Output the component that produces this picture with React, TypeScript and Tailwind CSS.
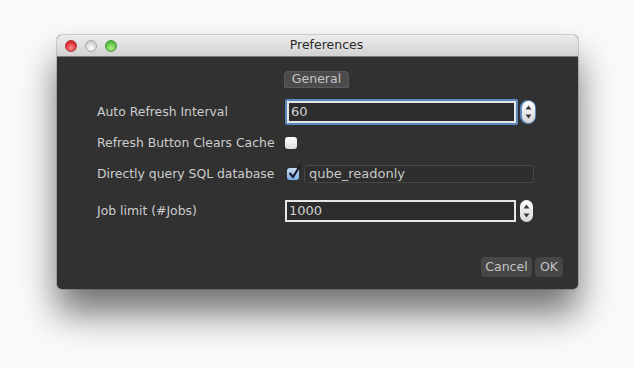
import React from "react";

const font = { fontFamily: '"DejaVu Sans", "Liberation Sans", sans-serif' };

function Spinner({ focused }: { focused?: boolean }) {
  return (
    <div
      className={
        "ml-[2px] flex h-[24px] w-[16px] items-center justify-center rounded-[8px] " +
        (focused ? "bg-[#5a88bd]" : "")
      }
    >
      <div className="flex h-[22px] w-[13px] flex-col items-center justify-between rounded-[7px] bg-gradient-to-b from-[#ffffff] to-[#d6d6d6] py-[4px]">
        <svg width="7" height="5" viewBox="0 0 7 5">
          <path d="M3.5 0.5 L6.5 4.5 L0.5 4.5 Z" fill="#3a3a3a" />
        </svg>
        <svg width="7" height="5" viewBox="0 0 7 5">
          <path d="M0.5 0.5 L6.5 0.5 L3.5 4.5 Z" fill="#3a3a3a" />
        </svg>
      </div>
    </div>
  );
}

export default function App() {
  return (
    <div className="h-[368px] w-[635px] bg-[#fafafa] pl-[57px] pt-[35px]" style={font}>
      <div className="flex h-[254px] w-[521px] flex-col overflow-hidden rounded-[5px] bg-[#313131] shadow-[0_24px_36px_rgba(0,0,0,0.55),0_0_0_1px_rgba(0,0,0,0.15)]">
        {/* title bar */}
        <div className="relative flex h-[22px] shrink-0 items-center border-b border-[#7a7a7a] bg-gradient-to-b from-[#ececec] to-[#d2d2d2]">
          <div className="absolute left-[8px] top-[5px] flex gap-[8px]">
            <div className="h-[12px] w-[12px] rounded-full border border-[#b0303a] bg-[radial-gradient(circle_at_50%_70%,#ff8a8a,#d8262f_70%)]" />
            <div className="h-[12px] w-[12px] rounded-full border border-[#a8a8a8] bg-[radial-gradient(circle_at_50%_70%,#ffffff,#d0d0d0_70%)]" />
            <div className="h-[12px] w-[12px] rounded-full border border-[#4a9a3a] bg-[radial-gradient(circle_at_50%_70%,#b8f08a,#4fb83a_70%)]" />
          </div>
          <div className="w-full pl-[18px] text-center text-[12.5px] leading-none text-[#2a2a2a]">Preferences</div>
        </div>

        {/* body */}
        <div className="flex flex-1 flex-col">
          <div className="ml-[227px] mt-[14px] flex h-[17px] w-[65px] items-center justify-center rounded-t-[4px] rounded-b-[1px] border border-[#5a5a5a] bg-[#4b4b4b] text-[12.5px] leading-none text-[#c4c4c4]">
            General
          </div>

          {/* row 1 */}
          <div className="mt-[12px] flex h-[24px] items-center">
            <div className="w-[228px] pl-[40px] text-[12.4px] text-[#cdcdcd]">Auto Refresh Interval</div>
            <div className="flex items-center">
              <div className="h-[26px] w-[233px] rounded-[2px] bg-[#5a88bd] p-[2px]">
                <div className="flex h-full items-center border-[2px] border-[#e6e6e6] bg-[#2c2c2c] pl-[2px] text-[13px] text-[#d2d2d2]">
                  60
                </div>
              </div>
              <Spinner focused />
            </div>
          </div>

          {/* row 2 */}
          <div className="mt-[13px] flex h-[12px] items-center">
            <div className="w-[228px] pl-[40px] text-[12.4px] text-[#cdcdcd]">Refresh Button Clears Cache</div>
            <div className="h-[12px] w-[12px] rounded-[3px] bg-gradient-to-b from-[#ffffff] to-[#dedede]" />
          </div>

          {/* row 3 */}
          <div className="mt-[16px] flex h-[18px] items-center">
            <div className="w-[228px] pl-[40px] text-[12.4px] text-[#cdcdcd]">Directly query SQL database</div>
            <div className="relative ml-[2px] h-[12px] w-[12px] rounded-[3px] bg-gradient-to-b from-[#c6dcf5] to-[#7eaee4]">
              <svg className="absolute -top-[4px] left-[1px]" width="14" height="15" viewBox="0 0 14 15">
                <path d="M1.5 9 L5 13 L12.5 1" fill="none" stroke="#1a1a2a" strokeWidth="2.2" />
              </svg>
            </div>
            <div className="ml-[5px] flex h-[18px] w-[230px] items-center rounded-[3px] border border-[#474747] bg-[#2e2e2e] pl-[4px] text-[13px] text-[#c8c8c8]">
              qube_readonly
            </div>
          </div>

          {/* row 4 */}
          <div className="mt-[17px] flex h-[22px] items-center">
            <div className="w-[228px] pl-[40px] text-[12.4px] text-[#cdcdcd]">Job limit (#Jobs)</div>
            <div className="flex items-center">
              <div className="flex h-[22px] w-[231px] items-center border-[2px] border-[#e6e6e6] bg-[#2c2c2c] pl-[2px] text-[13px] text-[#d2d2d2]">
                1000
              </div>
              <Spinner />
            </div>
          </div>

          {/* buttons */}
          <div className="mt-[35px] flex justify-end gap-[3px] pr-[15px]">
            <div className="flex h-[20px] w-[51px] items-center justify-center rounded-[4px] bg-[#464646] text-[12.5px] text-[#c4c4c4]">
              Cancel
            </div>
            <div className="flex h-[20px] w-[28px] items-center justify-center rounded-[4px] bg-[#464646] text-[12.5px] text-[#c4c4c4]">
              OK
            </div>
          </div>
        </div>
      </div>
    </div>
  );
}
